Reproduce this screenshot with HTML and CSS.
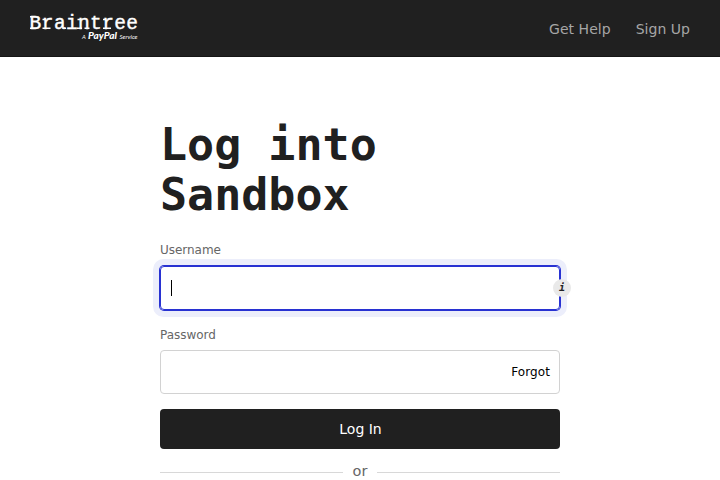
FILE: index.html
```html
<!DOCTYPE html>
<html lang="en">
<head>
<meta charset="utf-8">
<title>Log into Sandbox</title>
<link rel="stylesheet" href="styles.css">
</head>
<body>
<header class="header">
  <svg class="logo" width="110" height="30" viewBox="0 0 110 30" role="img" aria-label="Braintree, A PayPal Service">
    <text class="logo-name" y="16" x="-0.4 11.8 24 36 48 60 72.2 84.2 96.2">Braintree</text>
    <path class="logo-slabs" d="M0 3.8h3M0 15.2h3M12.5 6.4h3M12.5 15.2h8M34 15.2h2M47.5 6.4h3M47 15.2h5M54.5 15.2h5M73 6.4h3M73 15.2h8"/>
    <text class="logo-small" x="52" y="26" textLength="3.8" lengthAdjust="spacingAndGlyphs">A</text>
    <text class="logo-paypal" x="58" y="25.8" textLength="29" lengthAdjust="spacingAndGlyphs">PayPal</text>
    <text class="logo-small" x="89.5" y="26" textLength="18" lengthAdjust="spacingAndGlyphs">Service</text>
  </svg>
  <nav class="nav"><a>Get Help</a><a>Sign Up</a></nav>
</header>
<main class="login">
  <h1 class="title">Log into Sandbox</h1>
  <label class="label">Username</label>
  <div class="field field-focus"><span class="caret"></span><span class="info">i</span></div>
  <label class="label">Password</label>
  <div class="field"><a class="forgot">Forgot</a></div>
  <button class="submit">Log In</button>
  <div class="divider"><span>or</span></div>
</main>
</body>
</html>
```
FILE: styles.css
```css
* { box-sizing: border-box; }
html { overflow: hidden; }
body { margin: 0; height: 480px; overflow: hidden; background: #fff; color: #202020; font-family: "DejaVu Sans", sans-serif; }
.header { height: 57px; padding: 0 30px; display: flex; justify-content: space-between; background: #202020; border-bottom: 1px solid #151515; }
.logo { margin-top: 13px; overflow: visible; fill: #fff; }
.logo-name { font: 19.5px "Liberation Mono", monospace; stroke: #fff; stroke-width: .4px; }
.logo-slabs { fill: none; stroke: #fff; stroke-width: 1.5px; }
.logo-small { font: italic 6px Lato, sans-serif; }
.logo-paypal { font: italic 900 8.5px Lato, sans-serif; }
.nav { display: flex; gap: 25px; font-size: 14px; line-height: 20px; padding-top: 19px; color: #a6a6a6; letter-spacing: .03px; }
.login { width: 400px; margin: 0 auto; padding-top: 63px; }
.title { margin: 0 0 22px; font: bold 45px/50px "DejaVu Sans Mono", monospace; }
.label { display: block; font-size: 12px; line-height: 16px; margin-bottom: 8px; color: #666; letter-spacing: -.03px; }
.field { position: relative; height: 44px; margin: -1px 0 16px; padding: 0 9px; border: 1px solid #d2d2d2; border-radius: 4px; display: flex; align-items: center; justify-content: flex-end; }
.field-focus { justify-content: flex-start; margin: 0 0 17px; border-color: #2832d2; box-shadow: 0 0 0 1px #2832d2, 0 0 0 7px #eceefb; }
.caret { width: 1px; height: 16px; margin-left: 1px; background: #000; }
.info { position: absolute; right: -12px; top: 12px; width: 18px; height: 18px; border-radius: 50%; background: #e9e9e9; color: #222; font: italic bold 10px/18px "DejaVu Sans Mono", monospace; text-align: center; }
.forgot { color: #000; font-size: 12px; letter-spacing: .08px; }
.submit { display: block; width: 100%; height: 40px; margin: -1px 0 12px; padding: 0 0 0 1px; border: 0; border-radius: 4px; background: #202020; color: #fff; font: 14px "DejaVu Sans", sans-serif; }
.divider { display: flex; align-items: center; gap: 10px; color: #666; font-size: 14.5px; line-height: 20px; }
.divider::before, .divider::after { content: ""; flex: 1; height: 1px; margin-top: 2px; background: #d8d8d8; }
```
